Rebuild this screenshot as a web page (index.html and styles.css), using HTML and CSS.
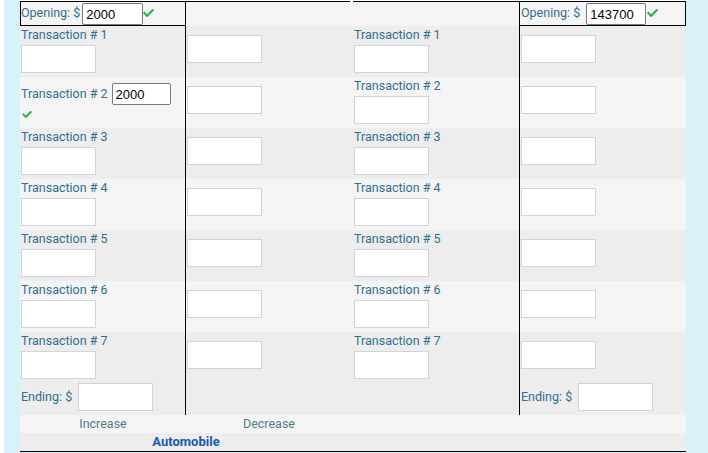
FILE: index.html
```html
<!DOCTYPE html>
<html>
<head>
<meta charset="utf-8">
<link rel="stylesheet" href="styles.css">
</head>
<body>
<div class="wrap">
  <div class="sheet">
    <div class="row open light">
      <div class="c1 box"><span class="olbl">Opening: $</span><input class="val v1" value="2000"><svg class="chk" viewBox="0 70 512 372"><path d="M173.898 439.404l-166.4-166.4c-9.997-9.997-9.997-26.206 0-36.204l36.203-36.204c9.997-9.998 26.207-9.998 36.204 0L192 312.69 432.095 72.596c9.997-9.997 26.207-9.997 36.204 0l36.203 36.204c9.997 9.997 9.997 26.206 0 36.204l-294.4 294.401c-9.998 9.997-26.207 9.997-36.204-.001z"/></svg></div>
      <div class="c2"><div class="topline"></div></div>
      <div class="c3"><div class="topline"></div></div>
      <div class="c4 box"><span class="olbl">Opening: $</span><input class="val v4" value="143700"><svg class="chk" viewBox="0 70 512 372"><path d="M173.898 439.404l-166.4-166.4c-9.997-9.997-9.997-26.206 0-36.204l36.203-36.204c9.997-9.998 26.207-9.998 36.204 0L192 312.69 432.095 72.596c9.997-9.997 26.207-9.997 36.204 0l36.203 36.204c9.997 9.997 9.997 26.206 0 36.204l-294.4 294.401c-9.998 9.997-26.207 9.997-36.204-.001z"/></svg></div>
    </div>

    <div class="row tr dark">
      <div class="c1"><div class="lbl">Transaction # 1</div><input class="e"></div>
      <div class="c2"><input class="e mid"></div>
      <div class="c3"><div class="lbl">Transaction # 1</div><input class="e"></div>
      <div class="c4"><input class="e mid"></div>
    </div>

    <div class="row tr light">
      <div class="c1">
        <div class="line"><span>Transaction # 2</span><input class="val v2" value="2000"></div>
        <svg class="chk chk2" viewBox="0 70 512 372"><path d="M173.898 439.404l-166.4-166.4c-9.997-9.997-9.997-26.206 0-36.204l36.203-36.204c9.997-9.998 26.207-9.998 36.204 0L192 312.69 432.095 72.596c9.997-9.997 26.207-9.997 36.204 0l36.203 36.204c9.997 9.997 9.997 26.206 0 36.204l-294.4 294.401c-9.998 9.997-26.207 9.997-36.204-.001z"/></svg>
      </div>
      <div class="c2"><input class="e mid"></div>
      <div class="c3"><div class="lbl">Transaction # 2</div><input class="e"></div>
      <div class="c4"><input class="e mid"></div>
    </div>

    <div class="row tr dark">
      <div class="c1"><div class="lbl">Transaction # 3</div><input class="e"></div>
      <div class="c2"><input class="e mid"></div>
      <div class="c3"><div class="lbl">Transaction # 3</div><input class="e"></div>
      <div class="c4"><input class="e mid"></div>
    </div>

    <div class="row tr light">
      <div class="c1"><div class="lbl">Transaction # 4</div><input class="e"></div>
      <div class="c2"><input class="e mid"></div>
      <div class="c3"><div class="lbl">Transaction # 4</div><input class="e"></div>
      <div class="c4"><input class="e mid"></div>
    </div>

    <div class="row tr dark">
      <div class="c1"><div class="lbl">Transaction # 5</div><input class="e"></div>
      <div class="c2"><input class="e mid"></div>
      <div class="c3"><div class="lbl">Transaction # 5</div><input class="e"></div>
      <div class="c4"><input class="e mid"></div>
    </div>

    <div class="row tr light">
      <div class="c1"><div class="lbl">Transaction # 6</div><input class="e"></div>
      <div class="c2"><input class="e mid"></div>
      <div class="c3"><div class="lbl">Transaction # 6</div><input class="e"></div>
      <div class="c4"><input class="e mid"></div>
    </div>

    <div class="row tr dark">
      <div class="c1"><div class="lbl">Transaction # 7</div><input class="e"></div>
      <div class="c2"><input class="e mid"></div>
      <div class="c3"><div class="lbl">Transaction # 7</div><input class="e"></div>
      <div class="c4"><input class="e mid"></div>
    </div>

    <div class="row end dark">
      <div class="c1"><div class="eline"><span>Ending: $</span><input class="e"></div></div>
      <div class="c2"></div>
      <div class="c3"></div>
      <div class="c4"><div class="eline"><span>Ending: $</span><input class="e"></div></div>
    </div>

    <div class="row foot light">
      <div class="side">Increase</div>
      <div class="side">Decrease</div>
      <div></div>
      <div></div>
    </div>

    <div class="row auto dark">
      <div class="title">Automobile</div>
    </div>
  </div>
</div>
</body>
</html>
```

FILE: styles.css
```css
* { box-sizing: border-box; }

body {
  margin: 0 0 0 4px;
  font-family: Roboto, "Liberation Sans", sans-serif;
  font-size: 12.5px;
  color: #31708f;
}

.wrap {
  background: #d9f1f8;
  padding-left: 16px;
  height: 453px;
}

.sheet {
  width: 666px;
  background: #fff;
  padding-top: 1px;
}

.row {
  display: grid;
  grid-template-columns: 166px 166px 167px 167px;
}

.light { background: #f4f4f4; }
.dark { background: #ededed; }

.open { height: 25px; }
.tr { height: 51px; }
.end { height: 32px; }

.c1 { border-right: 1px solid #000; padding-left: 1px; }
.c2 { padding-left: 1px; }
.c3 { padding-left: 2px; }
.c4 { border-left: 1px solid #000; padding-left: 1px; }

.box {
  border: 1px solid #000;
  display: flex;
  align-items: flex-start;
  padding-top: 1px;
}
.c1.box { padding-left: 0; }

.olbl {
  line-height: 16px;
  margin-top: 2px;
  white-space: nowrap;
}

.topline { border-top: 1px solid #000; }
.c2 .topline { margin-left: -1px; margin-right: 2px; }
.c3 .topline { margin-left: -1px; }

.val {
  font-family: "Liberation Sans", Arial, sans-serif;
  font-size: 13px;
  color: #000;
  height: 22px;
  width: 61px;
  padding: 0 3px;
  border: 1px solid #7a7a7a;
  border-radius: 2px;
  background: #fff;
  margin: 0;
}
.v1 { margin-left: 2px; }
.v4 { margin-left: 6px; width: 60px; }
.v2 { margin-left: 4px; width: 59px; }

.chk {
  width: 11px;
  height: 8px;
  margin-top: 6px;
  fill: #2cb54b;
  flex: none;
}
.c4 .chk { margin-left: 1px; }

.lbl {
  line-height: 16px;
  padding-top: 1px;
}

.e {
  display: block;
  width: 75px;
  height: 28px;
  margin: 2px 0 0;
  padding: 0 4px;
  border: 1px solid #cdd5de;
  border-radius: 0;
  background: #fff;
  font-family: "Liberation Sans", Arial, sans-serif;
  font-size: 13px;
}
.e.mid { margin-top: 9px; }

.line {
  display: flex;
  align-items: center;
  height: 22px;
  margin-top: 6px;
  line-height: 16px;
}

.chk2 {
  display: block;
  width: 10px;
  height: 7px;
  margin: 6px 0 0 1px;
}

.eline {
  display: flex;
  align-items: center;
  gap: 6px;
  line-height: 16px;
}
.eline .e { margin-top: 0; }

.foot { height: 18px; }
.side {
  line-height: 18px;
  text-align: center;
  color: #4e7f8a;
}

.auto {
  height: 19px;
  border-bottom: 1px solid #000;
}
.title {
  grid-column: 1 / span 2;
  text-align: center;
  line-height: 18px;
  font-weight: bold;
  font-size: 13px;
  color: #1a58b3;
}
```
